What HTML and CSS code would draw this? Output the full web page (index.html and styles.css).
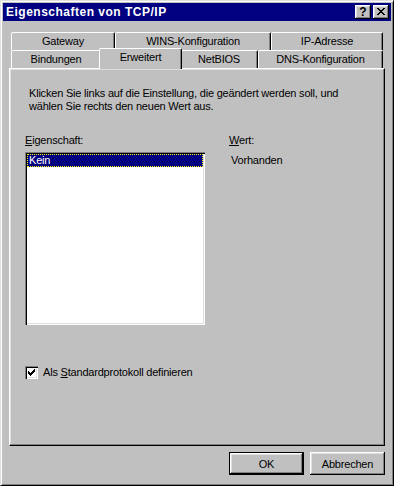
FILE: index.html
```html
<!DOCTYPE html>
<html lang="de">
<head>
    <meta charset="UTF-8">
    <meta name="viewport" content="width=device-width, initial-scale=1.0">
    <title>Eigenschaften von TCP/IP</title>
    <link rel="stylesheet" href="styles.css">
</head>
<body>

<div class="window">
    <div class="titlebar">
        <span class="title">Eigenschaften von TCP/IP</span>
        <div class="caption-buttons">
            <button class="cap-btn help">?</button>
            <button class="cap-btn close">
                <svg width="8" height="7" viewBox="0 0 8 7" shape-rendering="crispEdges">
                    <path fill="#000" d="M0 0h2v1h-2z M6 0h2v1h-2z M1 1h2v1h-2z M5 1h2v1h-2z M2 2h4v1h-4z M3 3h2v1h-2z M2 4h4v1h-4z M1 5h2v1h-2z M5 5h2v1h-2z M0 6h2v1h-2z M6 6h2v1h-2z"/>
                </svg>
            </button>
        </div>
    </div>

    <div class="tabs">
        <div class="tab-row">
            <div class="tab tab-gateway">Gateway</div>
            <div class="tab tab-wins">WINS-Konfiguration</div>
            <div class="tab tab-ip">IP-Adresse</div>
        </div>
        <div class="tab-row">
            <div class="tab tab-bindungen">Bindungen</div>
            <div class="tab tab-erweitert active">Erweitert</div>
            <div class="tab tab-netbios">NetBIOS</div>
            <div class="tab tab-dns">DNS-Konfiguration</div>
        </div>
    </div>

    <div class="panel">
        <p class="hint">Klicken Sie links auf die Einstellung, die geändert werden soll, und<br>wählen Sie rechts den neuen Wert aus.</p>

        <div class="fields">
            <div class="field">
                <div class="label"><u>E</u>igenschaft:</div>
                <div class="listbox">
                    <div class="list-item selected">Kein</div>
                </div>
            </div>
            <div class="field">
                <div class="label"><u>W</u>ert:</div>
                <div class="value">Vorhanden</div>
            </div>
        </div>

        <div class="check-row">
            <span class="checkbox">
                <svg width="7" height="7" viewBox="0 0 7 7" shape-rendering="crispEdges">
                    <path fill="#000" d="M6 0h1v1h-1z M5 1h2v1h-2z M0 2h1v1h-1z M4 2h3v1h-3z M0 3h2v1h-2z M3 3h3v1h-3z M0 4h5v1h-5z M1 5h3v1h-3z M2 6h1v1h-1z"/>
                </svg>
            </span>
            <span>Als <u>S</u>tandardprotokoll definieren</span>
        </div>
    </div>

    <div class="dialog-buttons">
        <button class="btn default">OK</button>
        <button class="btn">Abbrechen</button>
    </div>
</div>

</body>
</html>
```

FILE: styles.css
```css
* {
    box-sizing: border-box;
}
body {
    margin: 0;
    background-color: #c0c0c0;
    font-family: "Liberation Sans", Arial, sans-serif;
    font-size: 11px;
    line-height: 13px;
    letter-spacing: -0.2px;
    color: #000;
}
.window {
    width: 394px;
    height: 486px;
    padding: 2px;
    background-color: #c0c0c0;
    border: 1px solid;
    border-color: #dfdfdf #000 #000 #dfdfdf;
    box-shadow: inset 1px 1px #fff, inset -1px -1px #808080;
}

/* title bar */
.titlebar {
    height: 18px;
    background-color: #000080;
    color: #fff;
    display: flex;
    align-items: center;
    justify-content: space-between;
    padding: 0 2px 0 3px;
}
.title {
    font-weight: bold;
    font-size: 12px;
    letter-spacing: 0.5px;
    line-height: 18px;
}
.caption-buttons {
    display: flex;
    gap: 2px;
}
.cap-btn {
    width: 16px;
    height: 14px;
    padding: 0;
    border: none;
    background-color: #c0c0c0;
    box-shadow: inset -1px -1px #000, inset 1px 1px #fff, inset -2px -2px #808080, inset 2px 2px #dfdfdf;
    display: flex;
    align-items: center;
    justify-content: center;
    font-family: "Liberation Sans", Arial, sans-serif;
    font-weight: bold;
    font-size: 12px;
    line-height: 14px;
    color: #000;
}
.cap-btn.close svg {
    margin: 0 1px 1px 0;
}

/* tabs */
.tabs {
    margin: 11px 0 0 8px;
    width: 372px;
}
.tab-row {
    display: flex;
    height: 18px;
}
.tab {
    height: 18px;
    padding-top: 2px;
    text-align: center;
    background-color: #c0c0c0;
    border: 1px solid;
    border-bottom: none;
    border-color: #fff #000 transparent #fff;
    border-radius: 2px 2px 0 0;
    box-shadow: inset -1px 0 #808080;
    white-space: nowrap;
}
.tab-gateway { width: 104px; }
.tab-wins { width: 156px; }
.tab-ip { width: 112px; }
.tab-bindungen { width: 90px; }
.tab-erweitert { width: 79px; }
.tab-netbios { width: 78px; }
.tab-dns { width: 125px; }
.tab.active {
    position: relative;
    z-index: 1;
    width: 83px;
    height: 21px;
    margin: -2px -2px -1px;
}

/* panel */
.panel {
    margin-left: 6px;
    width: 376px;
    height: 378px;
    padding: 18px 15px 0;
    border: 1px solid;
    border-color: #fff #000 #000 #fff;
    box-shadow: inset -1px -1px #808080, inset 1px 1px #dfdfdf;
}
.hint {
    margin: 0 0 0 4px;
}
.fields {
    margin-top: 21px;
    display: grid;
    grid-template-columns: 180px auto;
    column-gap: 24px;
}
.listbox {
    margin-top: 5px;
    height: 173px;
    padding: 2px;
    background-color: #fff;
    box-shadow: inset 1px 1px #808080, inset 2px 2px #000, inset -1px -1px #fff, inset -2px -2px #dfdfdf;
}
.list-item {
    height: 13px;
    padding-left: 1px;
    line-height: 11px;
    border: 1px solid transparent;
}
.list-item.selected {
    background-color: #000080;
    color: #fff;
    border: 1px dotted #ffff00;
}
.value {
    margin-top: 7px;
    padding-left: 2px;
}
.check-row {
    margin-top: 41px;
    display: flex;
    align-items: center;
    gap: 5px;
}
.checkbox {
    width: 13px;
    height: 13px;
    background-color: #fff;
    box-shadow: inset 1px 1px #808080, inset 2px 2px #000, inset -1px -1px #fff, inset -2px -2px #dfdfdf;
    display: flex;
    align-items: center;
    justify-content: center;
}

/* bottom buttons */
.dialog-buttons {
    margin-top: 6px;
    padding-right: 6px;
    display: flex;
    justify-content: flex-end;
    gap: 6px;
}
.btn {
    width: 75px;
    height: 23px;
    padding: 0;
    border: none;
    background-color: #c0c0c0;
    font-family: "Liberation Sans", Arial, sans-serif;
    font-size: 11px;
    letter-spacing: -0.2px;
    color: #000;
    box-shadow: inset -1px -1px #000, inset 1px 1px #fff, inset -2px -2px #808080, inset 2px 2px #dfdfdf;
}
.btn.default {
    border: 1px solid #000;
}
```
